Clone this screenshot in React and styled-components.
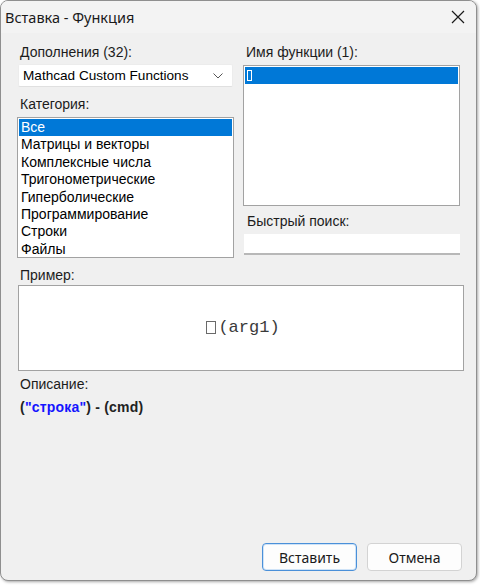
import React from "react";
import styled, { createGlobalStyle } from "styled-components";

const Global = createGlobalStyle`
  html, body { margin: 0; padding: 0; background: #ffffff; }
  body { width: 480px; height: 585px; overflow: hidden; }
  * { box-sizing: border-box; }
`;

const Window = styled.div`
  width: 477px;
  height: 581px;
  border: 1px solid #8f8f8f;
  border-radius: 8px;
  background: #f0f0f0;
  box-shadow: 1px 1px 3px rgba(0, 0, 0, 0.35);
  display: flex;
  flex-direction: column;
  overflow: hidden;
  font-family: "Liberation Sans", Arial, sans-serif;
  font-size: 14px;
  color: #000;
`;

const TitleBar = styled.div`
  height: 32px;
  flex: none;
  display: flex;
  align-items: center;
  justify-content: space-between;
  padding: 0 0 0 4px;
  background: #f3f3f3;
`;

const Title = styled.span`
  font-family: "Noto Sans", "Open Sans", sans-serif;
  font-size: 14.5px;
  color: #1a1a1a;
  margin-top: -1px;
`;

const CloseButton = styled.button`
  width: 36px;
  height: 32px;
  border: 0;
  background: transparent;
  display: flex;
  align-items: center;
  justify-content: center;
  padding: 0;
`;

const Body = styled.div`
  flex: 1;
  display: flex;
  flex-direction: column;
  padding: 11px 0 0 16px;
`;

const Columns = styled.div`
  display: grid;
  grid-template-columns: 217px 217px;
  column-gap: 9px;
`;

const Column = styled.div`
  display: flex;
  flex-direction: column;
`;

const Label = styled.div`
  height: 16px;
  line-height: 16px;
  padding-left: ${(p) => p.$indent ?? 3}px;
  margin-top: ${(p) => p.$top ?? 0}px;
  margin-bottom: ${(p) => p.$bottom ?? 4}px;
  color: #1c1c1c;
`;

const Combo = styled.div`
  height: 23px;
  background: #fff;
  margin-left: 1px;
  width: 215px;
  border: 1px solid #ececec;
  border-bottom-color: #e0e0e0;
  border-radius: 2px;
  display: flex;
  align-items: center;
  justify-content: space-between;
  padding: 0 9px 0 4px;
  font-size: 13.6px;
`;

const ListBox = styled.div`
  height: 141px;
  background: #fff;
  border: 1px solid #a2a2a2;
  padding: 1px;
  margin-top: ${(p) => p.$top ?? 0}px;
`;

const Row = styled.div`
  height: 17.4px;
  line-height: 17px;
  padding-left: 2px;
  background: ${(p) => (p.$selected ? "#0078d7" : "transparent")};
  color: ${(p) => (p.$selected ? "#fff" : "#000")};
  white-space: nowrap;
`;

const Placeholder = styled.span`
  display: inline-block;
  width: 5px;
  height: 11px;
  border: 1px solid #fff;
  vertical-align: -1px;
`;

const SearchInput = styled.div`
  height: 21px;
  width: 216px;
  margin-left: 1px;
  background: #fff;
  border-bottom: 2px solid #b8b8b8;
`;

const Example = styled.div`
  width: 446px;
  height: 86px;
  margin-left: 1px;
  background: #fff;
  border: 1px solid #a2a2a2;
  display: flex;
  align-items: center;
  justify-content: center;
  font-family: "Liberation Mono", "Courier New", monospace;
  font-size: 17px;
  color: #3a3a3a;
  padding-left: 4px;
  padding-bottom: 2px;
`;

const Box = styled.span`
  display: inline-block;
  width: 10px;
  height: 13px;
  border: 1px solid #6a6a6a;
  margin-right: 2px;
  vertical-align: -1px;
`;

const Description = styled.div`
  padding-left: 3px;
  margin-top: 7px;
  font-weight: bold;
  color: #222;
  letter-spacing: 0.2px;
`;

const Accent = styled.span`
  color: #1515ff;
`;

const Footer = styled.div`
  margin-top: auto;
  display: flex;
  justify-content: flex-end;
  gap: 10px;
  padding: 0 14px 9px 0;
`;

const Button = styled.button`
  width: 95px;
  height: 28px;
  border-radius: 4px;
  background: #fdfdfd;
  border: 1px solid ${(p) => (p.$primary ? "#4a90d9" : "#d3d3d3")};
  box-shadow: ${(p) => (p.$primary ? "inset 0 0 0 1px #cfe3f7" : "none")};
  font-family: "Noto Sans", "Open Sans", sans-serif;
  font-size: 14px;
  color: #1a1a1a;
  padding: 0;
`;

const categories = [
  "Все",
  "Матрицы и векторы",
  "Комплексные числа",
  "Тригонометрические",
  "Гиперболические",
  "Программирование",
  "Строки",
  "Файлы",
];

export default function App() {
  return (
    <>
      <Global />
      <Window>
        <TitleBar>
          <Title>Вставка - Функция</Title>
          <CloseButton aria-label="Закрыть">
            <svg width="14" height="14" viewBox="0 0 14 14">
              <path d="M1 1 L13 13 M13 1 L1 13" stroke="#1a1a1a" strokeWidth="1.2" />
            </svg>
          </CloseButton>
        </TitleBar>
        <Body>
          <Columns>
            <Column>
              <Label>Дополнения (32):</Label>
              <Combo>
                <span>Mathcad Custom Functions</span>
                <svg width="10" height="6" viewBox="0 0 10 6">
                  <path d="M0.5 0.5 L5 5 L9.5 0.5" stroke="#555" strokeWidth="1" fill="none" />
                </svg>
              </Combo>
              <Label $top={9} $bottom={5}>Категория:</Label>
              <ListBox>
                {categories.map((c, i) => (
                  <Row key={c} $selected={i === 0}>
                    {c}
                  </Row>
                ))}
              </ListBox>
            </Column>
            <Column>
              <Label>Имя функции (1):</Label>
              <ListBox $top={1}>
                <Row $selected>
                  <Placeholder />
                </Row>
              </ListBox>
              <Label $top={7} $bottom={5} $indent={4}>Быстрый поиск:</Label>
              <SearchInput />
            </Column>
          </Columns>
          <Label $top={9} $bottom={2}>Пример:</Label>
          <Example>
            <Box />
            <span>(arg1)</span>
          </Example>
          <Label $top={5} $bottom={0}>Описание:</Label>
          <Description>
            (<Accent>"строка"</Accent>) - (cmd)
          </Description>
          <Footer>
            <Button $primary>Вставить</Button>
            <Button>Отмена</Button>
          </Footer>
        </Body>
      </Window>
    </>
  );
}
